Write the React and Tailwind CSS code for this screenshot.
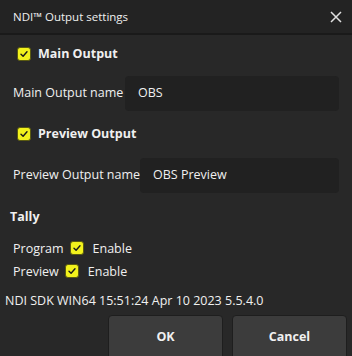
import React from "react";

function Check() {
  return (
    <span className="inline-flex h-[14px] w-[14px] items-center justify-center rounded-[3px] border border-[#5a5a10] bg-[#f2f21c]">
      <svg width="10" height="10" viewBox="0 0 10 10">
        <path d="M2 5.2 L4.1 7.2 L8 2.8" fill="none" stroke="#1a1a1a" strokeWidth="1.4" strokeLinecap="round" strokeLinejoin="round" />
      </svg>
    </span>
  );
}

function NameRow({ label, value, inputLeft }) {
  return (
    <div className="flex items-center pl-[13px] pr-[13px]">
      <span className={`whitespace-nowrap ${inputLeft}`}>{label}</span>
      <div className="flex h-[35px] flex-1 items-center rounded-[4px] bg-[#212121] pl-[13px]">{value}</div>
    </div>
  );
}

export default function App() {
  return (
    <div
      className="h-[356px] w-[352px] overflow-hidden bg-[#282828] text-[12.5px] text-[#f0f0f0]"
      style={{ fontFamily: '"Open Sans", "Noto Sans", sans-serif' }}
    >
      <div className="flex h-[35px] items-center justify-between border-b-2 border-[#1a1a1a] bg-[#232323] pl-[13px] pr-[8px]">
        <span className="text-[11.5px]">NDI™ Output settings</span>
        <svg width="14" height="14" viewBox="0 0 14 14" className="mr-[1px]">
          <path d="M2 2 L12 12 M12 2 L2 12" stroke="#e0e0e0" strokeWidth="1.5" />
        </svg>
      </div>

      <div className="mt-[9px] flex h-[20px] items-center gap-[7px] pl-[17px]">
        <Check />
        <span className="font-bold">Main Output</span>
      </div>

      <div className="mt-[12px]">
        <NameRow label="Main Output name" value="OBS" inputLeft="w-[112px]" />
      </div>

      <div className="mt-[13px] flex h-[20px] items-center gap-[7px] pl-[17px]">
        <Check />
        <span className="font-bold">Preview Output</span>
      </div>

      <div className="mt-[14px]">
        <NameRow label="Preview Output name" value="OBS Preview" inputLeft="w-[127px]" />
      </div>

      <div className="mt-[14px] flex h-[20px] items-center pl-[10px] font-bold">Tally</div>

      <div className="mt-[12px] flex h-[20px] items-center pl-[13px]">
        <span>Program</span>
        <span className="ml-[6px]"><Check /></span>
        <span className="ml-[9px]">Enable</span>
      </div>
      <div className="mt-[3px] flex h-[20px] items-center pl-[13px]">
        <span>Preview</span>
        <span className="ml-[6px]"><Check /></span>
        <span className="ml-[9px]">Enable</span>
      </div>

      <div className="mt-[9px] flex h-[20px] items-center whitespace-nowrap pl-[5px]">NDI SDK WIN64 15:51:24 Apr 10 2023 5.5.4.0</div>

      <div className="mt-[4px] flex justify-end gap-[9px] pr-[5px]">
        <button className="h-[45px] w-[115px] rounded-[4px] border border-[#1e1e1e] bg-[#3c3c3c] font-bold text-[#f0f0f0]">OK</button>
        <button className="h-[45px] w-[115px] rounded-[4px] border border-[#1e1e1e] bg-[#3c3c3c] font-bold text-[#f0f0f0]">Cancel</button>
      </div>
    </div>
  );
}
